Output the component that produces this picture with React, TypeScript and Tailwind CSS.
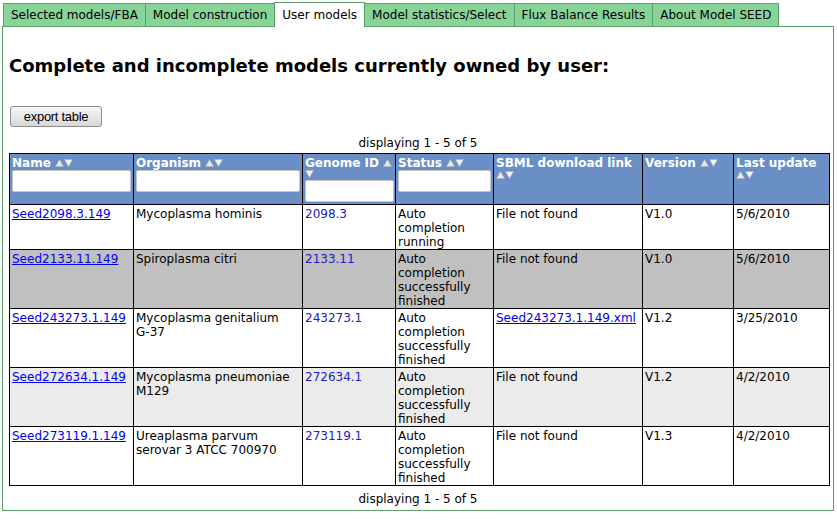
import * as React from "react"

const tabs = [
  "Selected models/FBA",
  "Model construction",
  "User models",
  "Model statistics/Select",
  "Flux Balance Results",
  "About Model SEED",
]

const models = [
  {
    name: "Seed2098.3.149",
    organism: ["Mycoplasma hominis"],
    genome: "2098.3",
    status: ["Auto", "completion", "running"],
    sbml: "",
    version: "V1.0",
    updated: "5/6/2010",
    bg: "bg-white",
  },
  {
    name: "Seed2133.11.149",
    organism: ["Spiroplasma citri"],
    genome: "2133.11",
    status: ["Auto", "completion", "successfully", "finished"],
    sbml: "",
    version: "V1.0",
    updated: "5/6/2010",
    bg: "bg-[#c0c0c0]",
  },
  {
    name: "Seed243273.1.149",
    organism: ["Mycoplasma genitalium", "G-37"],
    genome: "243273.1",
    status: ["Auto", "completion", "successfully", "finished"],
    sbml: "Seed243273.1.149.xml",
    version: "V1.2",
    updated: "3/25/2010",
    bg: "bg-white",
  },
  {
    name: "Seed272634.1.149",
    organism: ["Mycoplasma pneumoniae", "M129"],
    genome: "272634.1",
    status: ["Auto", "completion", "successfully", "finished"],
    sbml: "",
    version: "V1.2",
    updated: "4/2/2010",
    bg: "bg-[#ebebeb]",
  },
  {
    name: "Seed273119.1.149",
    organism: ["Ureaplasma parvum", "serovar 3 ATCC 700970"],
    genome: "273119.1",
    status: ["Auto", "completion", "successfully", "finished"],
    sbml: "",
    version: "V1.3",
    updated: "4/2/2010",
    bg: "bg-white",
  },
]

function SortUp() {
  return (
    <svg width="9" height="8" viewBox="0 0 9 8" className="inline-block align-baseline">
      <path d="M4.5 0.5 L8.5 7.5 L0.5 7.5 Z" fill="#e8e8e8" stroke="#b0b0b0" strokeWidth="0.6" />
    </svg>
  )
}

function SortDown() {
  return (
    <svg width="9" height="8" viewBox="0 0 9 8" className="inline-block align-baseline">
      <path d="M0.5 0.5 L8.5 0.5 L4.5 7.5 Z" fill="#f4f4f4" stroke="#b0b0b0" strokeWidth="0.6" />
    </svg>
  )
}

function FilterBox({ w }: { w: string }) {
  return <div className={`${w} h-[22px] bg-white border border-[#c8c8c8] rounded-[2px]`} />
}

const th = "border border-black align-top text-left px-[2px] pt-[2px] pb-[2px] font-bold text-white"
const td = "border border-black align-top px-[2px] pt-[2px] pb-0"

export default function App() {
  return (
    <div className="w-[837px] h-[522px] bg-white pt-[3px] pl-[2px] text-[12px] leading-[14px] text-black font-['DejaVu_Sans',Verdana,sans-serif]">
      <div className="flex pl-px relative z-10">
        {tabs.map(t =>
          t === "User models" ? (
            <div
              key={t}
              className="h-[25px] -mt-px px-[7px] flex items-center bg-white border border-b-0 border-[#5d9f69] -ml-px first:ml-0"
            >
              {t}
            </div>
          ) : (
            <div
              key={t}
              className="h-[24px] px-[7px] flex items-center bg-[#88d498] border border-[#5d9f69] -ml-px first:ml-0"
            >
              {t}
            </div>
          )
        )}
      </div>
      <div className="w-[832px] h-[485px] -mt-px border border-[#5d9f69] px-[6px]">
        <h1 className="mt-[28px] text-[18px] leading-[22px] font-bold">
          Complete and incomplete models currently owned by user:
        </h1>
        <button className="mt-[29px] ml-px h-[21px] w-[92px] rounded-[3px] border border-[#8c8c8c] bg-gradient-to-b from-[#f8f8f8] to-[#d8d8d8] text-[13px] leading-[19px] tracking-[-0.3px] font-['Liberation_Sans',Arial,sans-serif]">
          export table
        </button>
        <div className="mt-[6px] text-center leading-[20px]">displaying 1 - 5 of 5</div>
        <table className="w-[821px] border-collapse table-fixed">
          <colgroup>
            <col className="w-[124px]" />
            <col className="w-[169px]" />
            <col className="w-[93px]" />
            <col className="w-[98px]" />
            <col className="w-[149px]" />
            <col className="w-[91px]" />
            <col className="w-[96px]" />
          </colgroup>
          <thead>
            <tr className="bg-[#6a8fc6] h-[51px]">
              <th className={th}>
                <div>Name <SortUp /><SortDown /></div>
                <FilterBox w="w-[119px]" />
              </th>
              <th className={th}>
                <div>Organism <SortUp /><SortDown /></div>
                <FilterBox w="w-[164px]" />
              </th>
              <th className={th}>
                <div>Genome ID <SortUp /></div>
                <div className="h-[10px] leading-[8px]"><SortDown /></div>
                <FilterBox w="w-[89px]" />
              </th>
              <th className={th}>
                <div>Status <SortUp /><SortDown /></div>
                <FilterBox w="w-[93px]" />
              </th>
              <th className={th}>
                <div>SBML download link</div>
                <div className="leading-[10px]"><SortUp /><SortDown /></div>
              </th>
              <th className={th}>
                <div>Version <SortUp /><SortDown /></div>
              </th>
              <th className={th}>
                <div>Last update</div>
                <div className="leading-[10px]"><SortUp /><SortDown /></div>
              </th>
            </tr>
          </thead>
          <tbody>
            {models.map(m => (
              <tr key={m.name} className={m.bg}>
                <td className={td}>
                  <a href="#" className="text-[#0000ee] underline">{m.name}</a>
                </td>
                <td className={td}>
                  {m.organism.map(o => (
                    <div key={o}>{o}</div>
                  ))}
                </td>
                <td className={td}>
                  <span className="text-[#2020c8]">{m.genome}</span>
                </td>
                <td className={td}>
                  {m.status.map(s => (
                    <div key={s}>{s}</div>
                  ))}
                </td>
                <td className={td}>
                  {m.sbml ? (
                    <a href="#" className="text-[#0000ee] underline whitespace-nowrap">{m.sbml}</a>
                  ) : (
                    "File not found"
                  )}
                </td>
                <td className={td}>{m.version}</td>
                <td className={td}>{m.updated}</td>
              </tr>
            ))}
          </tbody>
        </table>
        <div className="mt-[6px] text-center">displaying 1 - 5 of 5</div>
      </div>
    </div>
  )
}
